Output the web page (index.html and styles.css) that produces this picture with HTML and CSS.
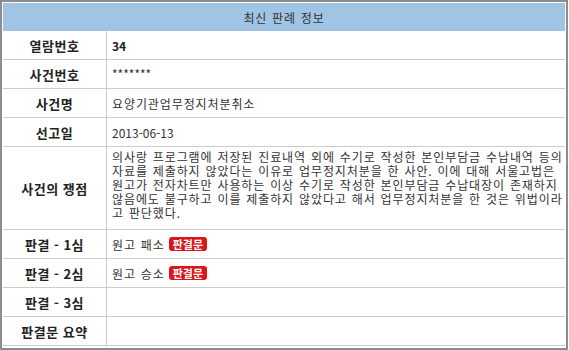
FILE: index.html
```html
<!DOCTYPE html>
<html lang="ko">
<head>
<meta charset="utf-8">
<title>최신 판례 정보</title>
<link rel="stylesheet" href="styles.css">
</head>
<body>
<div class="panel">
  <div class="head">최신 판례 정보</div>
  <div class="row"><div class="label">열람번호</div><div class="value strong">34</div></div>
  <div class="row"><div class="label">사건번호</div><div class="value stars">*******</div></div>
  <div class="row"><div class="label">사건명</div><div class="value">요양기관업무정지처분취소</div></div>
  <div class="row"><div class="label">선고일</div><div class="value num">2013-06-13</div></div>
  <div class="row tall"><div class="label">사건의 쟁점</div><div class="value para">의사랑 프로그램에 저장된 진료내역 외에 수기로 작성한 본인부담금 수납내역 등의<br>자료를 제출하지 않았다는 이유로 업무정지처분을 한 사안. 이에 대해 서울고법은<br>원고가 전자차트만 사용하는 이상 수기로 작성한 본인부담금 수납대장이 존재하지<br>않음에도 불구하고 이를 제출하지 않았다고 해서 업무정지처분을 한 것은 위법이라<br>고 판단했다.</div></div>
  <div class="row"><div class="label">판결 - 1심</div><div class="value"><span>원고 패소</span><span class="badge">판결문</span></div></div>
  <div class="row"><div class="label">판결 - 2심</div><div class="value"><span>원고 승소</span><span class="badge">판결문</span></div></div>
  <div class="row"><div class="label">판결 - 3심</div><div class="value"></div></div>
  <div class="row"><div class="label">판결문 요약</div><div class="value"></div></div>
</div>
</body>
</html>
```
FILE: styles.css
```css
html, body {
  margin: 0;
  padding: 0;
  background: #ffffff;
}
body {
  font-family: "Noto Sans CJK KR", "Noto Sans", sans-serif;
  font-size: 12px;
  color: #333333;
}
.panel {
  width: 562px;
  height: 344px;
  border: 2px solid #8c8c8c;
  padding: 1px;
  overflow: hidden;
}
.head {
  height: 28px;
  background: #a0c4e4;
  display: flex;
  align-items: center;
  justify-content: center;
  font-size: 12px;
  letter-spacing: 0.9px;
  word-spacing: 0.5px;
  color: #333333;
}
.row {
  display: grid;
  grid-template-columns: 104px 1fr;
  height: 28px;
  border-bottom: 1px solid #cccccc;
}
.row.tall {
  height: 82px;
}
.label {
  border-right: 1px solid #cccccc;
  display: flex;
  align-items: center;
  justify-content: center;
  font-weight: bold;
  font-size: 13px;
  letter-spacing: 0.5px;
  color: #222222;
}
.value {
  display: flex;
  align-items: center;
  padding-left: 5px;
  letter-spacing: 0.9px;
  word-spacing: 0.7px;
  white-space: nowrap;
}
.value.strong {
  font-weight: bold;
  letter-spacing: 0;
  color: #222222;
}
.value.num {
  letter-spacing: 0;
}
.value.stars {
  letter-spacing: 0;
  padding-bottom: 2px;
}
.value.para {
  display: block;
  line-height: 14px;
  padding-top: 3px;
  box-sizing: border-box;
}
.badge {
  display: inline-block;
  margin-left: 4px;
  height: 14px;
  line-height: 14px;
  padding: 0 4px;
  background: #d8161c;
  border-radius: 3px;
  color: #ffffff;
  font-size: 11px;
  font-weight: bold;
  letter-spacing: 0;
  word-spacing: 0;
}
```
